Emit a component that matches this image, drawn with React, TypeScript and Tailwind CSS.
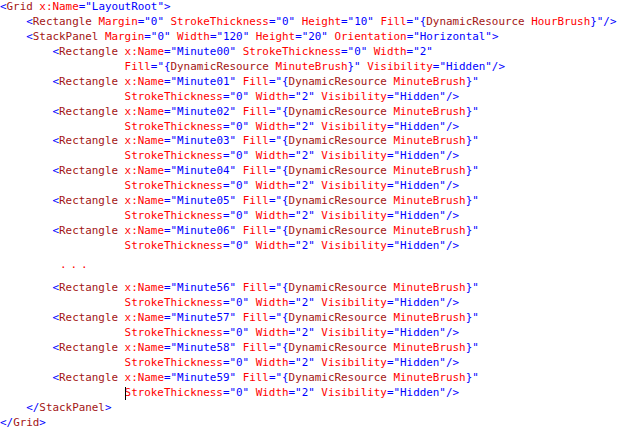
import React from 'react';

type Line = { text: string; cursorAt?: number };

const pad = (n: number) => ' '.repeat(n);

const rect = (n: string): Line[] => [
  { text: `${pad(8)}<Rectangle x:Name="Minute${n}" Fill="{DynamicResource MinuteBrush}"` },
  { text: `${pad(19)}StrokeThickness="0" Width="2" Visibility="Hidden"/>` },
];

const top: Line[] = [
  { text: '<Grid x:Name="LayoutRoot">' },
  { text: `${pad(4)}<Rectangle Margin="0" StrokeThickness="0" Height="10" Fill="{DynamicResource HourBrush}"/>` },
  { text: `${pad(4)}<StackPanel Margin="0" Width="120" Height="20" Orientation="Horizontal">` },
  { text: `${pad(8)}<Rectangle x:Name="Minute00" StrokeThickness="0" Width="2"` },
  { text: `${pad(19)}Fill="{DynamicResource MinuteBrush}" Visibility="Hidden"/>` },
  ...['01', '02', '03', '04', '05', '06'].flatMap(rect),
];

const last = rect('59');
last[1] = { ...last[1], cursorAt: 19 };

const bottom: Line[] = [
  ...['56', '57', '58'].flatMap(rect),
  ...last,
  { text: `${pad(4)}</StackPanel>` },
  { text: '</Grid>' },
];

const blue = 'text-[#0000ff]';
const brown = 'text-[#a31515]';
const red = 'text-[#ff0000]';

// tiny xaml highlighter, good enough for this snippet
function colorize(src: string) {
  const re = /(<\/?)([\w.]+)|([\w:]+)(=)|("\{)(\w+) (\w+)(\}")|("[^"]*")|(\/?>)|(\s+)/g;
  const out: React.ReactNode[] = [];
  let m: RegExpExecArray | null;
  let k = 0;
  while ((m = re.exec(src))) {
    if (m[1]) {
      out.push(<span key={k++} className={blue}>{m[1]}</span>);
      out.push(<span key={k++} className={brown}>{m[2]}</span>);
    } else if (m[3]) {
      out.push(<span key={k++} className={red}>{m[3]}</span>);
      out.push(<span key={k++} className={blue}>{m[4]}</span>);
    } else if (m[5]) {
      out.push(<span key={k++} className={blue}>{m[5]}</span>);
      out.push(<span key={k++} className={brown}>{m[6]}</span>);
      out.push(' ');
      out.push(<span key={k++} className={red}>{m[7]}</span>);
      out.push(<span key={k++} className={blue}>{m[8]}</span>);
    } else if (m[9] || m[10]) {
      out.push(<span key={k++} className={blue}>{m[9] || m[10]}</span>);
    } else {
      out.push(m[11]);
    }
  }
  return out;
}

const CodeLine = ({ text, cursorAt }: Line) => {
  if (cursorAt === undefined) {
    return <div className="h-[14.95px] whitespace-pre">{colorize(text)}</div>;
  }
  return (
    <div className="h-[14.95px] whitespace-pre">
      {text.slice(0, cursorAt)}
      <span className="relative">
        <span className="absolute left-0 top-[1px] h-[13px] w-px bg-black"></span>
      </span>
      {colorize(text.slice(cursorAt))}
    </div>
  );
};

export default function App() {
  return (
    <div
      className="w-[617px] h-[429px] overflow-hidden bg-white text-[10.9px] leading-[14.95px]"
      style={{ fontFamily: '"DejaVu Sans Mono", monospace' }}
    >
      {top.map((l, i) => (
        <CodeLine key={i} {...l} />
      ))}
      <div className="h-[14.95px] mt-[4.4px] mb-[8.1px] pl-[60px] whitespace-pre">
        <span className="text-[#ff0000] tracking-[3.9px]">...</span>
      </div>
      {bottom.map((l, i) => (
        <CodeLine key={i} {...l} />
      ))}
    </div>
  );
}
